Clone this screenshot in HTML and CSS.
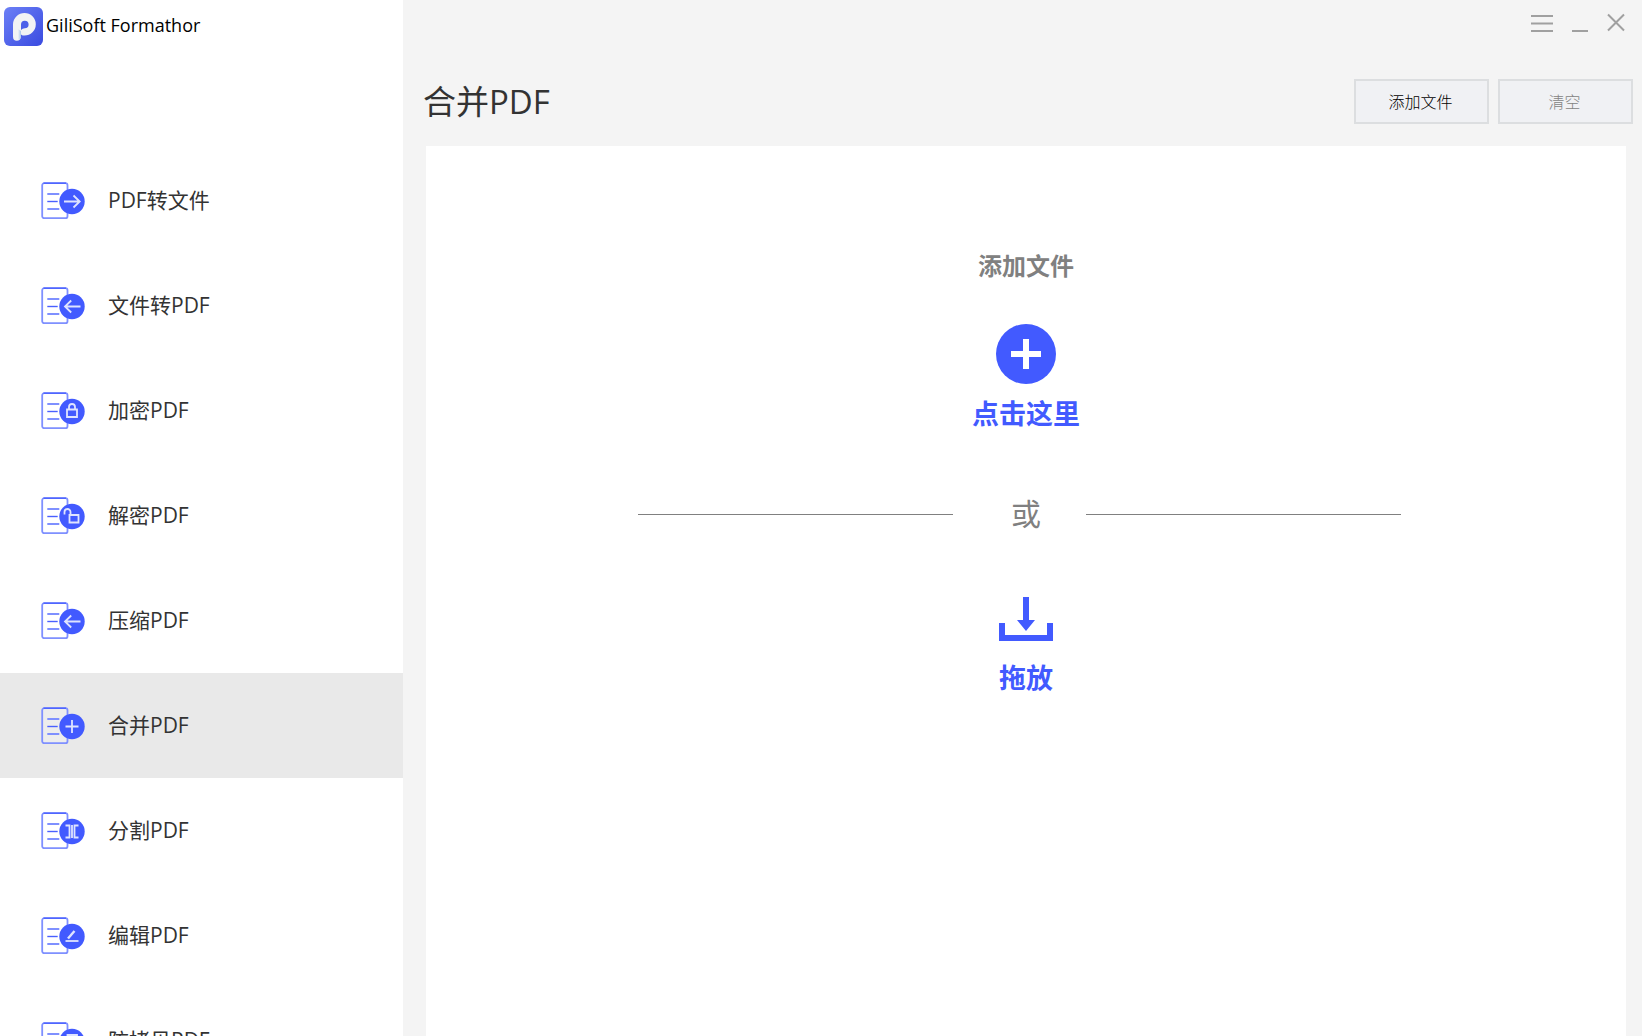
FILE: index.html
```html
<!DOCTYPE html>
<html lang="zh-CN">
<head>
    <meta charset="UTF-8">
    <meta name="viewport" content="width=device-width, initial-scale=1.0">
    <title>GiliSoft Formathor</title>
    <link rel="stylesheet" href="styles.css">
</head>
<body>
    <!-- page outline shared by all menu icons -->
    <svg class="defs" aria-hidden="true">
        <defs>
            <symbol id="doc" viewBox="0 0 44 38">
                <rect x="1.2" y="1.2" width="25.3" height="35" rx="2" fill="#fff" fill-opacity="0.2" stroke="#7f90ff" stroke-width="1.8"/>
                <path d="M2.5 1.2h22.5" stroke="#4a60ff" stroke-width="1.4"/>
                <path d="M6.3 12h12M6.3 27h12" stroke="#7f90ff" stroke-width="1.8"/>
                <path d="M6.3 19.5h10.4" stroke="#4a60ff" stroke-width="1.4"/>
                <circle cx="31" cy="19.5" r="12.7" fill="#425aff"/>
            </symbol>
        </defs>
    </svg>

    <div class="app">
        <aside class="sidebar">
            <div class="brand">
                <svg class="logo" viewBox="0 0 39 39" aria-hidden="true">
                    <defs>
                        <linearGradient id="logo-bg" x1="0" y1="0" x2="1" y2="1">
                            <stop offset="0" stop-color="#6c80f6"/>
                            <stop offset="1" stop-color="#3a4be0"/>
                        </linearGradient>
                        <linearGradient id="logo-stem" x1="0" y1="0" x2="1" y2="0">
                            <stop offset="0.3" stop-color="#f2f4f6"/>
                            <stop offset="1" stop-color="#a5c4ea"/>
                        </linearGradient>
                    </defs>
                    <rect width="39" height="39" rx="6" fill="url(#logo-bg)"/>
                    <path d="M9 17a11.500 11.500 0 0 1 11.500-11a11.300 11.300 0 0 1 0 22.600q-2 0-3.500-1.200v2q-.5 4.400-4.200 4.400q-3.800 0-3.800-4.400z" fill="#f2f3f4"/>
                    <path d="M13 33q3.700-.4 4-4v-5l-3-2q-2 3-1 11z" fill="url(#logo-stem)"/>
                    <path d="M17 23v-5.500a3.800 3.800 0 1 1 3.800 3.800q-2.300 0-3.800 1.700z" fill="#4c5fe9"/>
                </svg>
                <span>GiliSoft Formathor</span>
            </div>

            <nav class="menu">
                <a href="#" class="menu-item">
                    <svg class="menu-icon" viewBox="0 0 44 38" aria-hidden="true">
                        <use href="#doc"/>
                        <path class="mark" d="M23 19.500h15.500M32.500 13.500l6.200 6-6.200 6"/>
                    </svg>
                    <span>PDF转文件</span>
                </a>
                <a href="#" class="menu-item">
                    <svg class="menu-icon" viewBox="0 0 44 38" aria-hidden="true">
                        <use href="#doc"/>
                        <path class="mark" d="M39.500 19.500H24M30.200 13.500l-6.200 6 6.200 6"/>
                    </svg>
                    <span>文件转PDF</span>
                </a>
                <a href="#" class="menu-item">
                    <svg class="menu-icon" viewBox="0 0 44 38" aria-hidden="true">
                        <use href="#doc"/>
                        <path class="mark" d="M26 17.500h10v7.500H26zM28 17.500v-2.500a3 3 0 0 1 6 0v2.500"/>
                    </svg>
                    <span>加密PDF</span>
                </a>
                <a href="#" class="menu-item">
                    <svg class="menu-icon" viewBox="0 0 44 38" aria-hidden="true">
                        <use href="#doc"/>
                        <path class="mark" d="M28.500 18h9v7.500h-9zM23.500 17.500v-2.500a3 3 0 0 1 6 0v3"/>
                    </svg>
                    <span>解密PDF</span>
                </a>
                <a href="#" class="menu-item">
                    <svg class="menu-icon" viewBox="0 0 44 38" aria-hidden="true">
                        <use href="#doc"/>
                        <path class="mark" d="M39.500 19.500H24M30.200 13.500l-6.200 6 6.200 6"/>
                    </svg>
                    <span>压缩PDF</span>
                </a>
                <a href="#" class="menu-item active">
                    <svg class="menu-icon" viewBox="0 0 44 38" aria-hidden="true">
                        <use href="#doc"/>
                        <path class="mark" d="M24.500 19.500h13M31 13v13"/>
                    </svg>
                    <span>合并PDF</span>
                </a>
                <a href="#" class="menu-item">
                    <svg class="menu-icon" viewBox="0 0 44 38" aria-hidden="true">
                        <use href="#doc"/>
                        <path class="mark" d="M24.500 13.500h4v12h-4M37.500 13.500h-4v12h4M31 13v13"/>
                    </svg>
                    <span>分割PDF</span>
                </a>
                <a href="#" class="menu-item">
                    <svg class="menu-icon" viewBox="0 0 44 38" aria-hidden="true">
                        <use href="#doc"/>
                        <path class="mark" d="M24.500 24h13"/>
                        <path class="mark thick" d="M27 21.500l6.500-7.500"/>
                    </svg>
                    <span>编辑PDF</span>
                </a>
                <a href="#" class="menu-item">
                    <svg class="menu-icon" viewBox="0 0 44 38" aria-hidden="true">
                        <use href="#doc"/>
                        <path class="mark" d="M26.500 13h9.500v10h-9.500z"/>
                    </svg>
                    <span>防拷贝PDF</span>
                </a>
            </nav>
        </aside>

        <main class="content">
            <div class="window-bar">
                <button type="button" class="window-btn" aria-label="菜单">
                    <svg viewBox="0 0 22 22"><path d="M0 4h22M0 11.500h22M0 19h22"/></svg>
                </button>
                <button type="button" class="window-btn small" aria-label="最小化">
                    <svg viewBox="0 0 16 22"><path d="M0 19h16"/></svg>
                </button>
                <button type="button" class="window-btn close" aria-label="关闭">
                    <svg viewBox="0 0 18 22"><path d="M1 2.500l16 16M17 2.500L1 18.500"/></svg>
                </button>
            </div>

            <div class="header">
                <h1>合并PDF</h1>
                <div class="actions">
                    <button type="button" class="btn">添加文件</button>
                    <button type="button" class="btn" disabled>清空</button>
                </div>
            </div>

            <section class="drop-zone">
                <h2>添加文件</h2>
                <button type="button" class="add-btn">
                    <svg class="plus" viewBox="0 0 60 60" aria-hidden="true">
                        <circle cx="30" cy="30" r="30" fill="#425aff"/>
                        <path d="M15 30h30M30 15v30" stroke="#fff" stroke-width="6"/>
                    </svg>
                    点击这里
                </button>
                <div class="divider">
                    <span class="line"></span>
                    <span class="or">或</span>
                    <span class="line"></span>
                </div>
                <div class="drag">
                    <svg class="tray" viewBox="0 0 54 45" aria-hidden="true">
                        <path d="M24 0h6v23h6l-9 11-9-11h6z"/>
                        <path d="M0 26h6v12h42V26h6v18H0z"/>
                    </svg>
                    拖放
                </div>
            </section>
        </main>
    </div>
</body>
</html>
```
FILE: styles.css
```css
* {
    box-sizing: border-box;
}

body {
    margin: 0;
    background-color: #f4f4f4;
    color: #333;
    font-family: "Open Sans", "Noto Sans CJK SC", sans-serif;
}

h1, h2 {
    margin: 0;
}

button {
    padding: 0;
    font-family: inherit;
    cursor: pointer;
}

.defs {
    display: none;
}

.app {
    display: flex;
    height: 100vh;
    overflow: hidden;
}

/* Sidebar */
.sidebar {
    flex: 0 0 403px;
    background-color: #fff;
}

.brand {
    display: flex;
    align-items: center;
    gap: 3px;
    height: 148px;
    padding: 7px 4px 102px;
    color: #000;
    font-size: 18px;
    line-height: 36px;
}

.brand span,
.menu-item span {
    padding-bottom: 4px;
}

.logo {
    width: 39px;
    height: 39px;
}

.menu-item {
    display: flex;
    align-items: center;
    gap: 23px;
    height: 105px;
    padding-left: 41px;
    color: #333;
    font-size: 21px;
    text-decoration: none;
}

.menu-item.active {
    background-color: #e9e9e9;
}

.menu-icon {
    width: 44px;
    height: 38px;
}

.mark {
    fill: none;
    stroke: #dfe4ff;
    stroke-width: 1.8;
}

.mark.thick {
    stroke-width: 2.4;
}

/* Content */
.content {
    display: flex;
    flex: 1;
    flex-direction: column;
}

.window-bar {
    display: flex;
    justify-content: flex-end;
    gap: 19px;
    height: 79px;
    padding: 12px 17px;
}

.window-btn {
    width: 22px;
    height: 22px;
    border: none;
    background: none;
}

.window-btn.small {
    width: 16px;
}

.window-btn.close {
    width: 18px;
}

.window-btn svg {
    display: block;
    fill: none;
    stroke: #a0a0a0;
    stroke-width: 2;
}

.header {
    display: flex;
    align-items: center;
    justify-content: space-between;
    height: 45px;
    padding: 0 9px 0 20px;
}

.header h1 {
    padding-bottom: 4px;
    font-size: 33px;
    font-weight: 400;
}

.actions {
    display: flex;
    gap: 9px;
}

.btn {
    width: 135px;
    height: 45px;
    padding: 0 2px 2px 0;
    border: 2px solid #dcdee0;
    background-color: #f0f1f4;
    color: #000;
    font-size: 16px;
    font-weight: 300;
}

.btn:disabled {
    color: #838383;
    cursor: default;
}

.drop-zone {
    display: flex;
    flex: 1;
    flex-direction: column;
    align-items: center;
    margin: 22px 16px 0 23px;
    padding-top: 102px;
    background-color: #fff;
}

.drop-zone h2 {
    color: #808080;
    font-size: 24px;
    line-height: 36px;
}

.add-btn,
.drag {
    display: flex;
    flex-direction: column;
    align-items: center;
    border: none;
    background: none;
    color: #425aff;
    font-size: 27px;
    font-weight: 700;
    line-height: 40px;
}

.add-btn {
    gap: 10px;
    margin-top: 40px;
}

.plus {
    width: 60px;
    height: 60px;
}

.divider {
    display: flex;
    align-items: center;
    margin: 58px 13px 0 0;
}

.line {
    width: 315px;
    height: 1px;
    background-color: #808080;
}

.or {
    padding: 0 45px 0 58px;
    color: #808080;
    font-size: 30px;
    line-height: 44px;
}

.drag {
    gap: 16px;
    margin-top: 61px;
}

.tray {
    width: 54px;
    height: 45px;
    fill: #425aff;
}
```
